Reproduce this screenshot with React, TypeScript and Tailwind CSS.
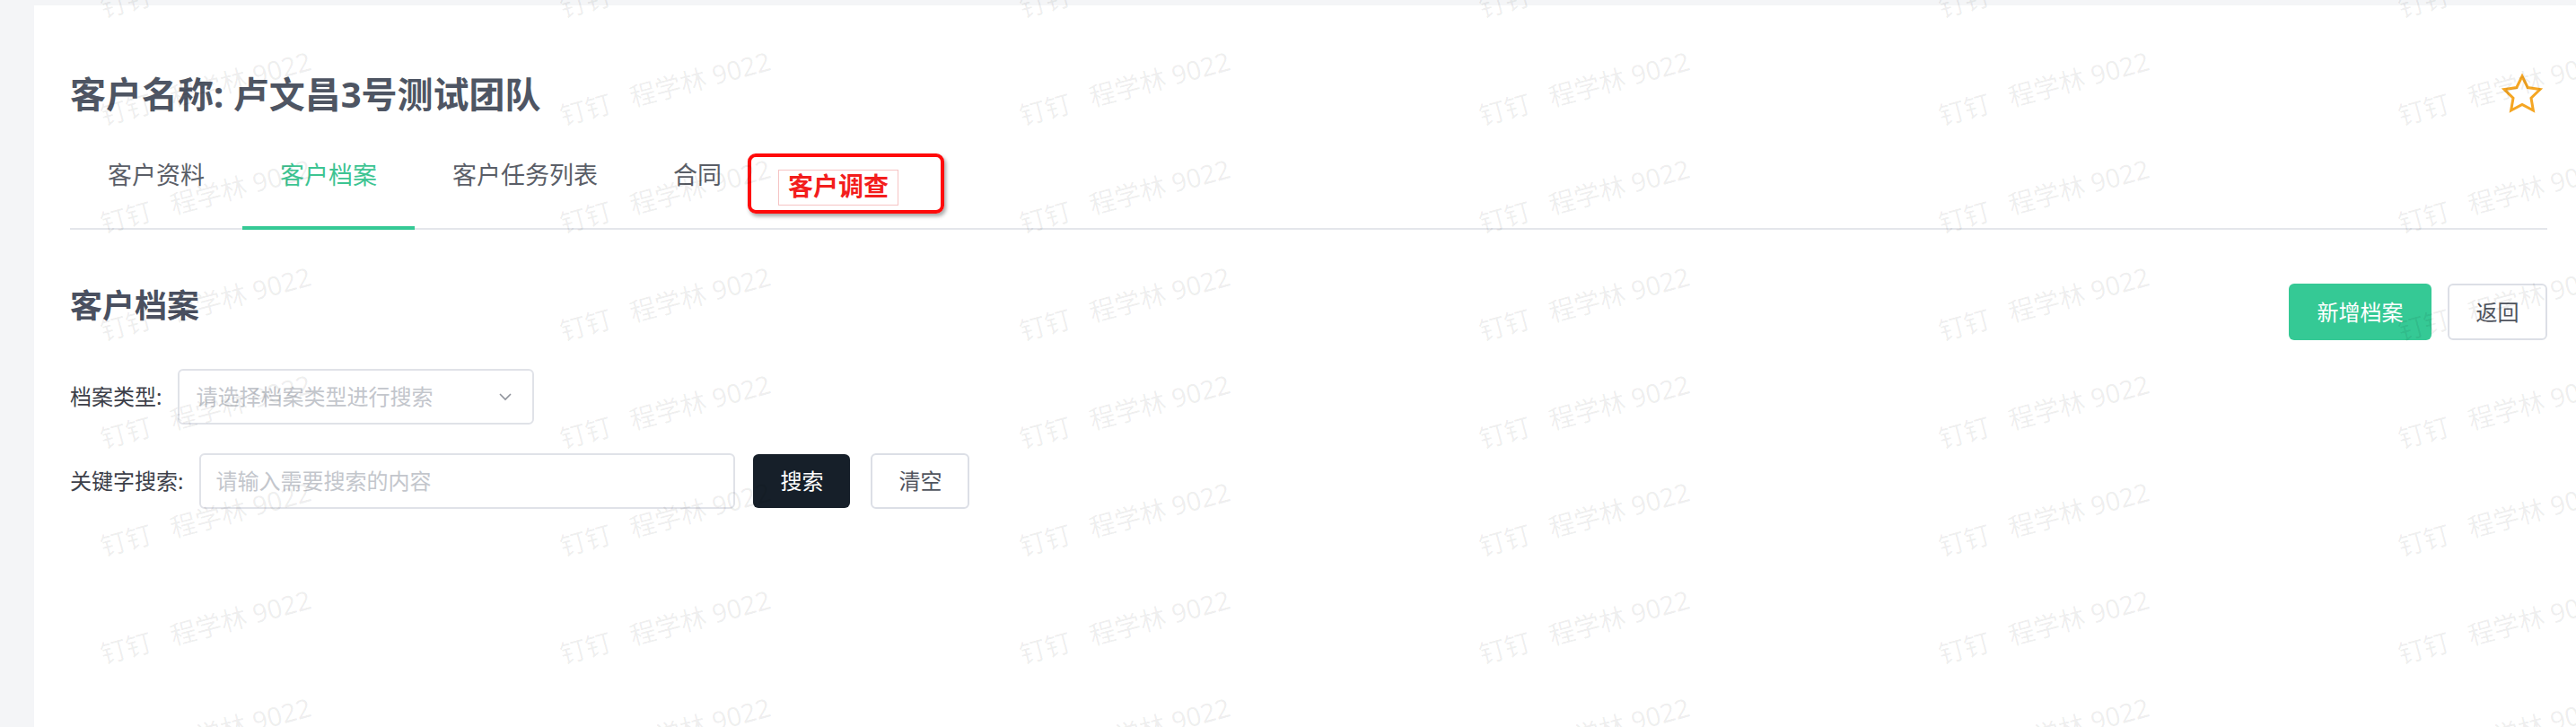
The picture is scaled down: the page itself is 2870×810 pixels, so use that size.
const TABS = ["客户资料", "客户档案", "客户任务列表", "合同"];
const ACTIVE_TAB = 1;

function Watermarks() {
  const cells = Array.from({ length: 8 * 6 });
  return (
    <div className="pointer-events-none absolute inset-0 overflow-hidden">
      <div className="-mt-[58px] grid grid-cols-[repeat(6,512px)] auto-rows-[120px]">
        {cells.map((_, i) => (
          <div key={i} className="flex items-end pb-[39px] pl-[116px]">
            <span className="origin-bottom-left -rotate-[15deg] whitespace-pre text-[29px] leading-none text-black/[0.07]">
              钉钉   程学林 9022
            </span>
          </div>
        ))}
      </div>
    </div>
  );
}

function StarIcon() {
  return (
    <svg width="48" height="48" viewBox="0 0 24 24" fill="none" className="shrink-0">
      <polygon
        points="12,2 15.09,8.26 22,9.27 17,14.14 18.18,21.02 12,17.77 5.82,21.02 7,14.14 2,9.27 8.91,8.26"
        stroke="#f5a623"
        strokeWidth="1.5"
        strokeLinejoin="miter"
      />
    </svg>
  );
}

function ChevronDown() {
  return (
    <svg width="16" height="10" viewBox="0 0 16 10" fill="none">
      <polyline points="2,2 8,8 14,2" stroke="#8f939b" strokeWidth="1.6" />
    </svg>
  );
}

function Tabs() {
  return (
    <div className="mt-[43px] flex border-b-2 border-[#e4e6eb]">
      {TABS.map((tab, i) => (
        <div
          key={tab}
          className={
            i === ACTIVE_TAB
              ? "-mb-[2px] h-[81px] border-b-4 border-[#35c995] px-[42px] text-[27px] leading-[40px] text-[#3cc492]"
              : "-mb-[2px] h-[81px] border-b-4 border-transparent px-[42px] text-[27px] leading-[40px] text-[#5a5e67]"
          }
        >
          {tab}
        </div>
      ))}
      <div className="-mb-[2px] h-[81px] border-b-4 border-transparent pl-[21px]">
        <div className="relative mt-[14px] h-[40px] border border-[#f6c4c4] px-[10px] text-[28px] font-bold leading-[34px] text-[#f31d1d]">
          客户调查
          <div className="absolute -left-[35px] -top-[19px] h-[67px] w-[219px] rounded-[9px] border-4 border-[#ff0a0a] shadow-[2px_3px_4px_rgba(0,0,0,0.35)]" />
        </div>
      </div>
    </div>
  );
}

export default function App() {
  return (
    <div className="relative h-[810px] overflow-hidden bg-[#f4f5f7] font-['Noto_Sans','Noto_Sans_CJK_SC',sans-serif]">
      <div className="ml-[38px] mt-[6px] h-[804px] bg-white pl-[40px] pr-[32px] pt-[72px]">
        <div className="flex h-[54px] items-center justify-between">
          <h1 className="text-[40px] font-bold leading-[54px] text-[#4e5563]">
            客户名称: 卢文昌3号测试团队
          </h1>
          <div className="mr-[4px]">
            <StarIcon />
          </div>
        </div>

        <Tabs />

        <div className="mt-[60px] flex items-start justify-between">
          <h2 className="text-[36px] font-semibold leading-[50px] text-[#4a5060]">客户档案</h2>
          <div className="flex gap-[18px]">
            <button className="h-[63px] w-[159px] rounded-[6px] bg-[#35c995] text-[24px] text-white">
              新增档案
            </button>
            <button className="h-[63px] w-[111px] rounded-[6px] border-2 border-[#dcdfe6] bg-white text-[24px] text-[#50545e]">
              返回
            </button>
          </div>
        </div>

        <div className="mt-[32px] flex items-center gap-[18px]">
          <span className="text-[24px] text-[#3d4049]">档案类型:</span>
          <div className="flex h-[62px] w-[397px] items-center justify-between rounded-[6px] border-2 border-[#e0e2e8] pl-[18px] pr-[22px]">
            <span className="text-[24px] text-[#c3c6cc]">请选择档案类型进行搜索</span>
            <ChevronDown />
          </div>
        </div>

        <div className="mt-[32px] flex items-center">
          <span className="mr-[18px] text-[24px] text-[#3d4049]">关键字搜索:</span>
          <div className="flex h-[62px] w-[597px] items-center rounded-[6px] border-2 border-[#e0e2e8] pl-[16px]">
            <span className="text-[24px] text-[#c3c6cc]">请输入需要搜索的内容</span>
          </div>
          <button className="ml-[20px] h-[60px] w-[108px] rounded-[6px] bg-[#161f29] text-[24px] text-white">
            搜索
          </button>
          <button className="ml-[23px] h-[62px] w-[110px] rounded-[6px] border-2 border-[#dcdfe6] bg-white text-[24px] text-[#50545e]">
            清空
          </button>
        </div>
      </div>
      <Watermarks />
    </div>
  );
}
